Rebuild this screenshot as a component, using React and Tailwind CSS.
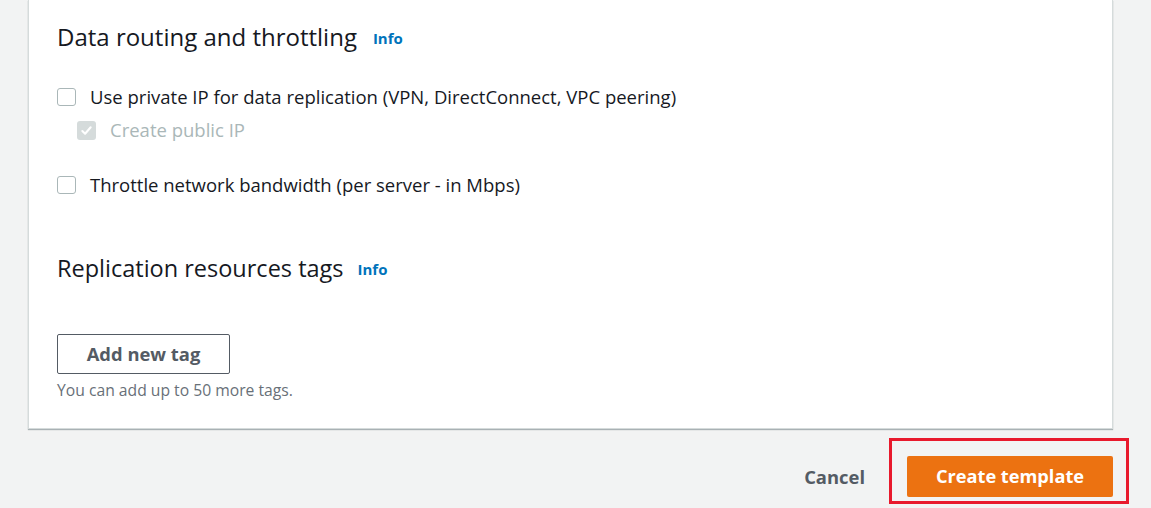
import React from 'react'

function Box({ checked, disabled }) {
  if (checked && disabled) {
    return (
      <span className="flex h-[19px] w-[19px] shrink-0 items-center justify-center rounded-[3px] bg-[#d5dbdb]">
        <svg width="13" height="13" viewBox="0 0 14 14" fill="none">
          <path d="M2.5 7.5l3 3 6-7" stroke="#fff" strokeWidth="2.2" strokeLinecap="round" strokeLinejoin="round" />
        </svg>
      </span>
    )
  }
  return <span className="h-[18px] w-[19px] shrink-0 rounded-[3px] border border-[#aab7b8] bg-white" />
}

function Heading({ children, small }) {
  return (
    <div className={small ? 'flex h-[28px] items-center gap-[14px]' : 'flex h-[28px] items-center gap-[16px]'}>
      <h2 className={small ? 'text-[23.5px] leading-[28px] font-normal text-[#16191f]' : 'text-[24px] leading-[28px] font-normal text-[#16191f]'}>
        {children}
      </h2>
      <a className="mt-[3px] text-[15px] font-bold text-[#0073bb]">Info</a>
    </div>
  )
}

export default function App() {
  return (
    <div
      className="flex h-[508px] w-full flex-col bg-[#f2f3f3] pl-[28px] pr-[38px]"
      style={{ fontFamily: '"Open Sans", "Noto Sans", Arial, sans-serif' }}
    >
      <div className="border-x border-b border-[#d5dbdb] bg-white pl-[28px] pt-[23px] pb-[28px] shadow-[0_1px_1px_rgba(0,28,36,0.3)]">
        <Heading>Data routing and throttling</Heading>

        <div className="mt-[34px] flex h-[24px] items-center gap-[14px] text-[18.5px] text-[#16191f]">
          <Box />
          <span>Use private IP for data replication (VPN, DirectConnect, VPC peering)</span>
        </div>
        <div className="mt-[9px] ml-[20px] flex h-[24px] items-center gap-[14px] text-[18.5px] text-[#aab7b8]">
          <Box checked disabled />
          <span>Create public IP</span>
        </div>
        <div className="mt-[31px] flex h-[24px] items-center gap-[14px] text-[18.5px] text-[#16191f]">
          <Box />
          <span>Throttle network bandwidth (per server - in Mbps)</span>
        </div>

        <div className="mt-[57px]">
          <Heading small>Replication resources tags</Heading>
        </div>

        <button className="mt-[52px] flex h-[40px] w-[173px] items-center justify-center rounded-[2px] border border-[#545b64] bg-white text-[18.4px] font-bold text-[#545b64]">
          Add new tag
        </button>
        <p className="mt-[6px] text-[15.7px] leading-[20px] text-[#687078]">You can add up to 50 more tags.</p>
      </div>

      <div className="mt-[9px] flex items-start justify-end gap-[24px]">
        <button className="mt-[18px] flex h-[41px] items-center text-[18.4px] font-bold text-[#545b64]">Cancel</button>
        <div className="-mr-[16px] border-[3px] border-[#e8192c] pt-[15px] pb-[4px] pl-[15px] pr-[13px]">
          <button className="flex h-[41px] w-[206px] items-center justify-center rounded-[2px] bg-[#ec7211] text-[18.2px] font-bold text-white">
            Create template
          </button>
        </div>
      </div>
    </div>
  )
}
